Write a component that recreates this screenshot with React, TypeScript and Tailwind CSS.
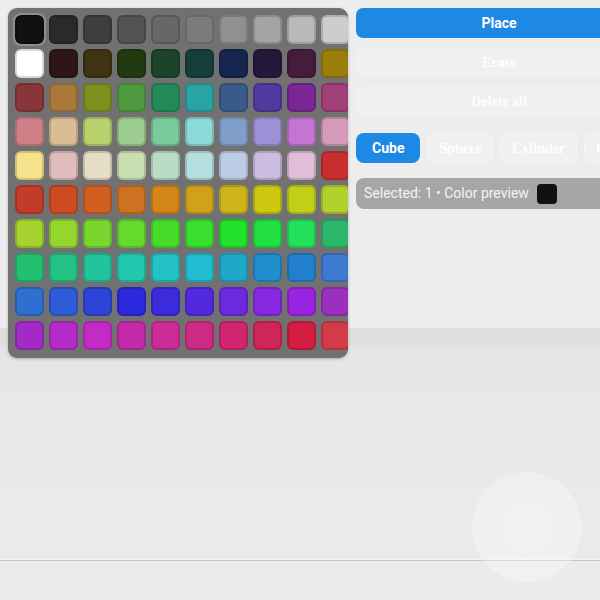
import { useState } from "react";

const palette = [
  ["#111111", "#2a2a2a", "#3e3e3e", "#535353", "#676767", "#7b7b7b", "#909090", "#a4a4a4", "#b9b9b9", "#cdcdcd"],
  ["#ffffff", "#2e1618", "#3f3314", "#213a10", "#1b4428", "#133e3c", "#17264f", "#26183a", "#461c3e", "#9a7e0a"],
  ["#8a3539", "#a8793b", "#7d901e", "#4e9a3e", "#258a5a", "#2aa3a4", "#385b8a", "#4f3aa0", "#7c2595", "#a03f78"],
  ["#cf8086", "#d9bd94", "#b8d16c", "#9dcc90", "#78cc9b", "#8adad8", "#7f9fc9", "#9d90d6", "#c474d3", "#d59ab9"],
  ["#f6e18d", "#dfbdbd", "#e6ddc5", "#c8dfb2", "#badcc5", "#b5dfdf", "#bdcce6", "#ccbce0", "#e0bed8", "#c92e2e"],
  ["#c33b29", "#cc4b23", "#d15f21", "#cd7220", "#d3871b", "#d0a11b", "#cdb41b", "#cdc80f", "#c2cf18", "#b3d12b"],
  ["#a5d22d", "#95d62e", "#7ad62e", "#66da2a", "#48dc2a", "#3ade2e", "#23e22b", "#22e041", "#22e05a", "#2bb86b"],
  ["#24c071", "#22c285", "#22c49b", "#22c8af", "#22c2c5", "#22bcd0", "#21a8c9", "#1f8ecc", "#2080cd", "#3c7bd1"],
  ["#306fd1", "#2e5bd7", "#2d45d7", "#2a29db", "#3b2bdc", "#5229de", "#6c29de", "#8629e0", "#9b23e2", "#9a2fc0"],
  ["#a22bc8", "#b42bc8", "#c42bc4", "#c42bab", "#cc2b98", "#cc2b85", "#d02571", "#d0255b", "#d41d41", "#d43b49"],
];

const shapes = ["Cube", "Sphere", "Cylinder", "Cone"];

function Swatch({ color, active, onPick }: { color: string; active: boolean; onPick: () => void }) {
  return (
    <button
      type="button"
      onClick={onPick}
      className={
        active
          ? "h-[29px] w-[29px] rounded-[6px] border-2 border-black/25 outline-2 outline-[#8e8e8e]"
          : "h-[29px] w-[29px] rounded-[6px] border-2 border-black/15"
      }
      style={{ backgroundColor: color }}
    />
  );
}

export default function App() {
  const [picked, setPicked] = useState("0-0");
  const [shape, setShape] = useState("Cube");

  return (
    <div
      className="relative h-[600px] w-[600px] overflow-hidden bg-[#ececec]"
      style={{ fontFamily: "Roboto, 'Liberation Sans', sans-serif" }}
    >
      {/* Scene: sky and floor bands */}
      <div className="flex h-full flex-col">
        <div className="h-[328px] bg-[#ededed]" />
        <div className="h-[17px] bg-[#dedede]" />
        <div className="h-[30px] bg-gradient-to-b from-[#e4e4e4] to-[#e7e7e7]" />
        <div className="h-[1px] bg-[#eaeaea]" />
        <div className="h-[20px] bg-[#e7e7e7]" />
        <div className="h-[1px] bg-[#ebebeb]" />
        <div className="h-[40px] bg-[#e8e8e8]" />
        <div className="h-[1px] bg-[#ececec]" />
        <div className="h-[50px] bg-[#e9e9e9]" />
        <div className="h-[1px] bg-[#ededed]" />
        <div className="h-[70px] bg-[#eaeaea]" />
        <div className="h-[1px] bg-[#f2f2f2]" />
        <div className="h-[1px] bg-[#c6c6c6]" />
        <div className="flex-1 bg-[#ebebeb]" />
      </div>

      {/* HUD */}
      <div className="absolute inset-0 flex items-start gap-2 p-2">
        <div className="h-[350px] w-[340px] shrink-0 overflow-hidden rounded-[9px] bg-[#717171] p-[7px] shadow-[0_1px_3px_rgba(0,0,0,0.25)]">
          <div className="grid w-max grid-cols-[repeat(10,29px)] gap-[5px]">
            {palette.map((row, r) =>
              row.map((color, c) => (
                <Swatch
                  key={`${r}-${c}`}
                  color={color}
                  active={picked === `${r}-${c}`}
                  onPick={() => setPicked(`${r}-${c}`)}
                />
              ))
            )}
          </div>
        </div>

        <div className="flex w-[286px] shrink-0 flex-col">
          <button
            type="button"
            className="h-[30px] rounded-[7px] bg-[#1e88e5] text-[14px] font-bold text-white"
          >
            Place
          </button>
          <button
            type="button"
            className="mt-[9px] h-[30px] rounded-[7px] bg-white/20 font-['Liberation_Serif',serif] text-[14px] font-bold text-white/90"
          >
            Erase
          </button>
          <button
            type="button"
            className="mt-[9px] h-[30px] rounded-[7px] bg-white/20 font-['Liberation_Serif',serif] text-[14px] font-bold text-white/90"
          >
            Delete all
          </button>

          <div className="mt-[17px] flex gap-[7px]">
            {shapes.map((s) => (
              <button
                key={s}
                type="button"
                onClick={() => setShape(s)}
                className={
                  s === shape
                    ? "h-[30px] shrink-0 rounded-[8px] bg-[#1e88e5] px-4 text-[14px] font-bold text-white"
                    : "h-[30px] shrink-0 rounded-[8px] border border-white/30 bg-white/20 px-[11px] font-['Liberation_Serif',serif] text-[14px] font-bold text-white/90"
                }
              >
                {s}
              </button>
            ))}
          </div>

          <div className="mt-[15px] flex h-[31px] items-center gap-[8px] rounded-[8px] bg-[#a6a6a6] px-2">
            <span className="text-[14px] text-[#f4f4f4]">Selected: 1 • Color preview</span>
            <span className="h-[20px] w-[20px] rounded-[4px] bg-[#111111]" />
          </div>
        </div>
      </div>

      {/* Joystick */}
      <div className="absolute left-[472px] top-[472px] flex h-[110px] w-[110px] items-center justify-center rounded-full bg-white/30">
        <div className="h-[52px] w-[52px] rounded-full bg-white/5" />
      </div>
    </div>
  );
}
